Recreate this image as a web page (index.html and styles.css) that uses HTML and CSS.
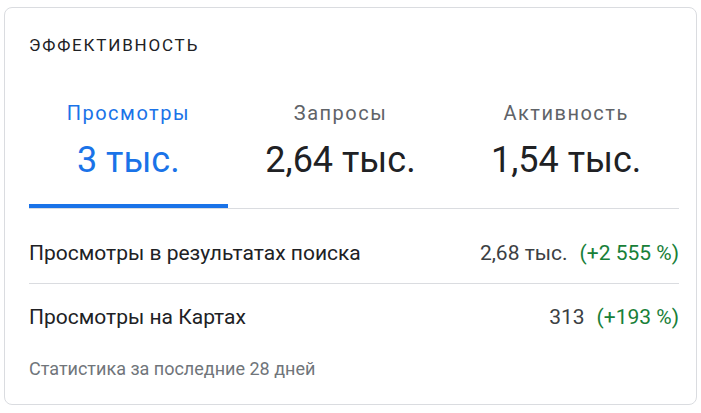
FILE: index.html
```html
<!DOCTYPE html>
<html lang="ru">
<head>
    <meta charset="UTF-8">
    <meta name="viewport" content="width=device-width, initial-scale=1.0">
    <title>Эффективность</title>
    <link rel="stylesheet" href="styles.css">
</head>
<body>
    <div class="card">
        <div class="card-title">Эффективность</div>
        <div class="tabs">
            <div class="tab active">
                <div class="tab-label">Просмотры</div>
                <div class="tab-value">3 тыс.</div>
            </div>
            <div class="tab">
                <div class="tab-label">Запросы</div>
                <div class="tab-value">2,64 тыс.</div>
            </div>
            <div class="tab">
                <div class="tab-label">Активность</div>
                <div class="tab-value">1,54 тыс.</div>
            </div>
        </div>
        <div class="rows">
            <div class="row">
                <span class="row-name">Просмотры в результатах поиска</span>
                <span class="row-value">2,68 тыс.</span>
                <span class="row-change">(+2&nbsp;555&nbsp;%)</span>
            </div>
            <div class="row">
                <span class="row-name">Просмотры на Картах</span>
                <span class="row-value">313</span>
                <span class="row-change">(+193&nbsp;%)</span>
            </div>
        </div>
        <div class="footnote">Статистика за последние 28 дней</div>
    </div>
</body>
</html>
```

FILE: styles.css
```css
body {
    font-family: Roboto, "Liberation Sans", Arial, sans-serif;
    margin: 0;
    padding: 0;
    background-color: #fff;
    color: #202124;
}
.card {
    margin: 7px 4px 0 4px;
    padding: 25px 17px 23px 24px;
    border: 1px solid #dadce0;
    border-radius: 8px;
    background: white;
}
.card-title {
    font-size: 17px;
    line-height: 24px;
    letter-spacing: 1.8px;
    text-transform: uppercase;
    color: #202124;
}
.tabs {
    display: flex;
    margin-top: 44px;
    border-bottom: 1px solid #dadce0;
}
.tab {
    flex: 1 1 auto;
    text-align: center;
    padding-bottom: 22px;
    border-bottom: 4px solid transparent;
}
.tab.active {
    border-bottom-color: #1a73e8;
    border-radius: 3px 3px 0 0;
}
.tab-label {
    font-size: 20px;
    line-height: 24px;
    letter-spacing: 1.5px;
    color: #5f6368;
}
.tab-value {
    margin-top: 13px;
    font-size: 36px;
    line-height: 44px;
    color: #202124;
}
.tab.active .tab-label,
.tab.active .tab-value {
    color: #1a73e8;
}
.row {
    display: flex;
    align-items: center;
    font-size: 21px;
    line-height: 28px;
}
.row:first-child {
    padding: 30px 0 16px;
    border-bottom: 1px solid #dadce0;
}
.row + .row {
    padding-top: 19px;
}
.row-name {
    flex: 1;
}
.row-value {
    color: #3c4043;
}
.row-change {
    margin-left: 12px;
    color: #188038;
}
.footnote {
    margin-top: 26px;
    font-size: 18px;
    line-height: 24px;
    color: #70757a;
}
```
